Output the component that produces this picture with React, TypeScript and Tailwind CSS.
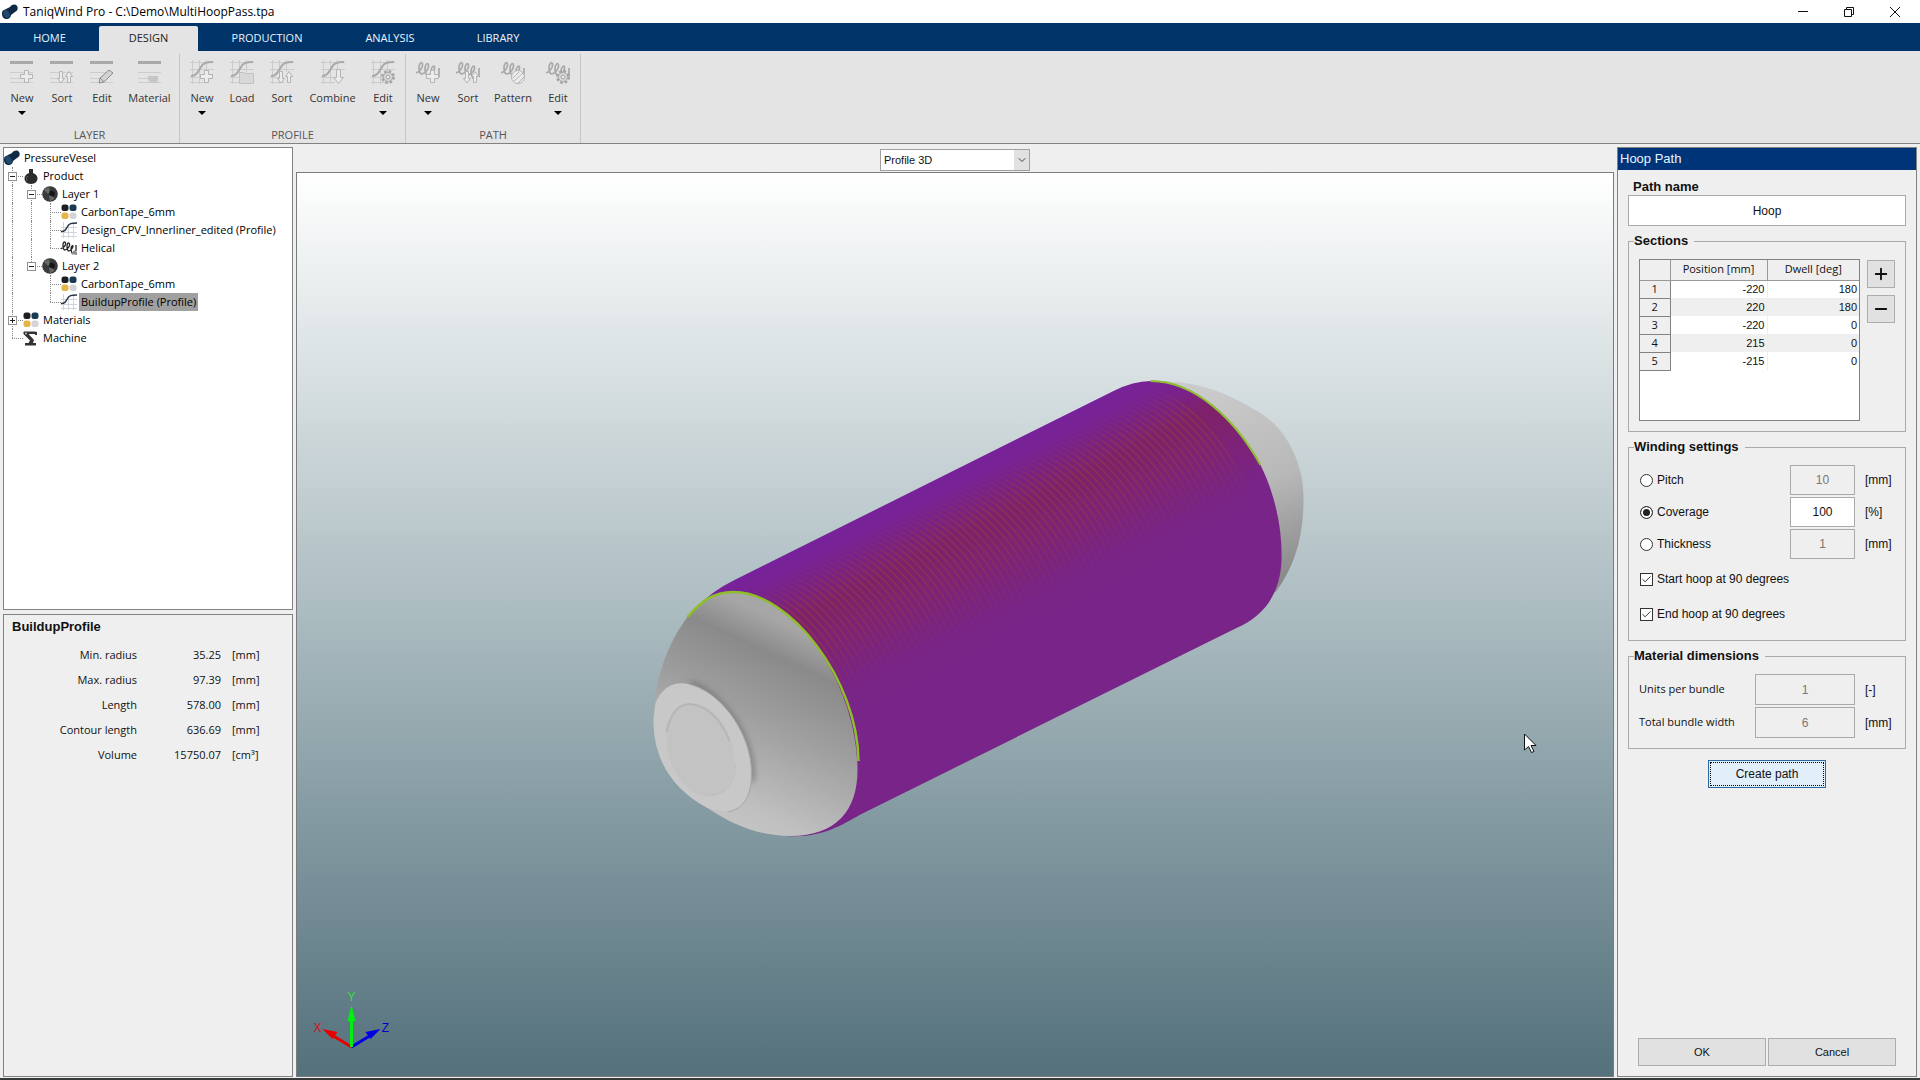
import type { ReactNode } from "react";
import { Check, ChevronDown, Minus, Plus } from "lucide-react";

type Base = "layer" | "profile" | "path";
type Badge = "plus" | "sort" | "pencil" | "swatch" | "folder" | "down" | "gear" | "pattern";
type Tool = { label: string; badge: Badge; width: string; menu?: boolean };

const tabs = [
  { label: "HOME", width: "w-[99px]" },
  { label: "DESIGN", width: "w-[99px]" },
  { label: "PRODUCTION", width: "w-[138px]" },
  { label: "ANALYSIS", width: "w-[108px]" },
  { label: "LIBRARY", width: "w-[108px]" },
];

const groups: { label: string; base: Base; tools: Tool[] }[] = [
  {
    label: "LAYER",
    base: "layer",
    tools: [
      { label: "New", badge: "plus", width: "w-10", menu: true },
      { label: "Sort", badge: "sort", width: "w-10" },
      { label: "Edit", badge: "pencil", width: "w-10" },
      { label: "Material", badge: "swatch", width: "w-[55px]" },
    ],
  },
  {
    label: "PROFILE",
    base: "profile",
    tools: [
      { label: "New", badge: "plus", width: "w-10", menu: true },
      { label: "Load", badge: "folder", width: "w-10" },
      { label: "Sort", badge: "sort", width: "w-10" },
      { label: "Combine", badge: "down", width: "w-[61px]" },
      { label: "Edit", badge: "gear", width: "w-10", menu: true },
    ],
  },
  {
    label: "PATH",
    base: "path",
    tools: [
      { label: "New", badge: "plus", width: "w-10", menu: true },
      { label: "Sort", badge: "sort", width: "w-10" },
      { label: "Pattern", badge: "pattern", width: "w-[50px]" },
      { label: "Edit", badge: "gear", width: "w-10", menu: true },
    ],
  },
];

type Cell = "none" | "line" | "tee" | "end" | "minus" | "minusEnd" | "plus";
type IconName = "vessel" | "product" | "layer" | "material" | "profile" | "helical" | "robot";

const tree: { label: string; icon: IconName; cells: Cell[]; selected?: boolean }[] = [
  { label: "PressureVesel", icon: "vessel", cells: [] },
  { label: "Product", icon: "product", cells: ["minus"] },
  { label: "Layer 1", icon: "layer", cells: ["line", "minus"] },
  { label: "CarbonTape_6mm", icon: "material", cells: ["line", "line", "tee"] },
  { label: "Design_CPV_Innerliner_edited (Profile)", icon: "profile", cells: ["line", "line", "tee"] },
  { label: "Helical", icon: "helical", cells: ["line", "line", "end"] },
  { label: "Layer 2", icon: "layer", cells: ["line", "minusEnd"] },
  { label: "CarbonTape_6mm", icon: "material", cells: ["line", "none", "tee"] },
  { label: "BuildupProfile (Profile)", icon: "profile", cells: ["line", "none", "end"], selected: true },
  { label: "Materials", icon: "material", cells: ["plus"] },
  { label: "Machine", icon: "robot", cells: ["end"] },
];

const properties = [
  { label: "Min. radius", value: "35.25", unit: "[mm]" },
  { label: "Max. radius", value: "97.39", unit: "[mm]" },
  { label: "Length", value: "578.00", unit: "[mm]" },
  { label: "Contour length", value: "636.69", unit: "[mm]" },
  { label: "Volume", value: "15750.07", unit: "[cm³]" },
];

const sections = [
  { position: -220, dwell: 180 },
  { position: 220, dwell: 180 },
  { position: -220, dwell: 0 },
  { position: 215, dwell: 0 },
  { position: -215, dwell: 0 },
];

const winding = [
  { label: "Pitch", value: "10", unit: "[mm]" },
  { label: "Coverage", value: "100", unit: "[%]", active: true },
  { label: "Thickness", value: "1", unit: "[mm]" },
];

const dimensions = [
  { label: "Units per bundle", value: "1", unit: "[-]" },
  { label: "Total bundle width", value: "6", unit: "[mm]" },
];

export default function App() {
  return (
    <div className="flex h-screen flex-col bg-[#efefef] font-['Open_Sans',sans-serif] text-[11px] text-[#111]">
      <TitleBar />
      <Ribbon />
      <main className="flex min-h-0 flex-1 gap-[3px] px-[3px] pt-[3px] pb-px">
        <aside className="flex w-[290px] shrink-0 flex-col gap-1">
          <ProjectTree />
          <Properties />
        </aside>
        <section className="flex min-w-0 flex-1 flex-col">
          <div className="flex h-[25px] items-end justify-center pb-px">
            <div className="relative">
              <select
                aria-label="View"
                className="block h-[22px] w-[150px] appearance-none border border-[#a0a0a0] bg-white pl-[3px] font-['Liberation_Sans',sans-serif] text-[11px]"
              >
                <option>Profile 3D</option>
              </select>
              <span className="pointer-events-none absolute top-px right-px flex h-5 w-[15px] items-center justify-center bg-[#e1e1e1]">
                <ChevronDown className="size-3 text-[#444]" strokeWidth={2} />
              </span>
            </div>
          </div>
          <div className="min-h-0 flex-1 border border-[#7b7b7b] bg-linear-to-b from-white via-[#a9babf] to-[#54717c]">
            <Viewport />
          </div>
        </section>
        <HoopPath />
      </main>
      <div className="h-0.5 bg-[#363a38]" />
    </div>
  );
}

function TitleBar() {
  return (
    <header className="flex h-[23px] items-center bg-white pr-[17px] pl-0.5">
      <TreeIcon name="vessel" />
      <h1 className="ml-[5px] flex-1 text-xs text-black">TaniqWind Pro - C:\Demo\MultiHoopPass.tpa</h1>
      <div className="flex gap-[30px]">
        <button aria-label="Minimize" className="flex size-4 items-center justify-center">
          <svg viewBox="0 0 12 12" className="size-3" stroke="#111" fill="none">
            <path d="M1 5.500h10" />
          </svg>
        </button>
        <button aria-label="Restore" className="flex size-4 items-center justify-center">
          <svg viewBox="0 0 12 12" className="size-3" stroke="#111" fill="none">
            <path d="M1.500 3.500h7v7h-7zM3.500 3.500v-2h7v7h-2" />
          </svg>
        </button>
        <button aria-label="Close" className="flex size-4 items-center justify-center">
          <svg viewBox="0 0 12 12" className="size-3" stroke="#111" fill="none">
            <path d="M1 1l10 10M11 1L1 11" />
          </svg>
        </button>
      </div>
    </header>
  );
}

function Ribbon() {
  return (
    <div>
      <nav className="flex h-7 bg-[#003468] pt-[3px]">
        {tabs.map((t) => (
          <button
            key={t.label}
            className={`${t.width} ${t.label === "DESIGN" ? "rounded-t-xs bg-[#e4e4e4] text-[#222]" : "text-[#e8f4ff]"}`}
          >
            {t.label}
          </button>
        ))}
      </nav>
      <div className="flex h-[93px] border-b border-[#828282] bg-[#e4e4e4] pt-[3px]">
        {groups.map((g) => (
          <div key={g.label} className="flex flex-col border-r border-[#c6c6c6] px-0.5">
            <div className="flex flex-1">
              {g.tools.map((t) => (
                <button key={t.label} className={`${t.width} flex flex-col items-center pt-1.5 text-[#333]`}>
                  <ToolIcon base={g.base} badge={t.badge} />
                  <span className="mt-1.5 leading-4">{t.label}</span>
                  {t.menu && (
                    <svg viewBox="0 0 8 4" className="mt-[5px] h-1 w-2">
                      <path d="M0 0h8L4 4z" fill="#000" />
                    </svg>
                  )}
                </button>
              ))}
            </div>
            <div className="text-center leading-4 text-[#555]">{g.label}</div>
          </div>
        ))}
      </div>
    </div>
  );
}

function ToolIcon({ base, badge }: { base: Base; badge: Badge }) {
  return (
    <svg viewBox="0 0 24 24" className="size-6" fill="none" stroke="#a9a9a9">
      {base === "layer" && (
        <>
          <path d="M0 2.500h23" strokeWidth="3" />
          <path d="M0 12.500h23M0 18.500h12M0 22.500h23" stroke="#cdcdcd" />
        </>
      )}
      {base === "profile" && (
        <>
          <path d="M2.500 0v24M9.500 0v24M16.500 0v12M0 2.500h24M0 9.500h24M0 17.500h12M0 22.500h14" stroke="#cbcbcb" />
          <path d="M1 16c5 0 7-4 10-9 2-4 5-5 12-5" strokeWidth="2" />
        </>
      )}
      {base === "path" && (
        <path
          d="M0 13C4 12 7 7 6.500 4 6 1 3 3 3 8c0 4 1 6 3 6 4-1 7-6 6.500-9-.5-3-3.500-1-3.500 4 0 4 1 6 3 6 4-1 7-5 6.500-8-.5-2-3.500 0-3.500 4 0 5 1 7 4 9M23 8v9"
          strokeWidth="1.700"
        />
      )}
      <ToolBadge badge={badge} />
    </svg>
  );
}

function ToolBadge({ badge }: { badge: Badge }) {
  const common = { fill: "#ececec", stroke: "#b4b4b4" };
  if (badge === "plus") return <path {...common} d="M14.500 10.500h4v4h4v4h-4v4h-4v-4h-4v-4h4z" />;
  if (badge === "sort")
    return <path {...common} d="M9.500 11.500h3v7h2l-3.500 4.500-3.500-4.500h2zM17.500 22.500h3v-6h2L19 11.500l-3.500 5h2z" />;
  if (badge === "pencil") return <path fill="#d2d2d2" stroke="#8d8d8d" d="M9 23l1-5 9-8 4 3-9 9zM10 18l4 4" />;
  if (badge === "swatch") return <path fill="#c6c6c6" stroke="none" d="M10 16h10v3c0 3-2 4-5 4s-5-2-5-4z" />;
  if (badge === "folder") return <path fill="#d8d8d8" stroke="#c2c2c2" d="M9.500 12.500h5l1 1h8v10h-14z" />;
  if (badge === "down") return <path {...common} d="M15.500 9.500h4v8h3L17.500 23.500l-5-6h3z" />;
  if (badge === "pattern")
    return (
      <>
        <circle {...common} cx="17" cy="17" r="6.500" />
        <path stroke="#b4b4b4" d="M12 18l6-6M13 21l9-8M17 23l6-6" />
      </>
    );
  return (
    <>
      <circle cx="17" cy="17" r="5.500" fill="#dcdcdc" stroke="#a4a4a4" strokeWidth="3" strokeDasharray="2.500 1.800" />
      <circle cx="17" cy="17" r="4.500" fill="#dcdcdc" stroke="#a9a9a9" />
      <circle cx="17" cy="17" r="2" fill="#f0f0f0" stroke="#9c9c9c" />
    </>
  );
}

function TreeIcon({ name }: { name: IconName }) {
  return (
    <svg viewBox="0 0 16 16" className="size-4 shrink-0">
      {name === "vessel" && (
        <>
          <path d="M1 6.500L8 3c1-2 4-3 6-2 2 1 2 4 1 5.500L9 11c0 2-2 4-4 4-3 0-5-2-5-5 0-1.500 0-2.500 1-3.500z" fill="#0e2a45" />
          <ellipse cx="4.500" cy="10" rx="3" ry="4" transform="rotate(-25 4.500 10)" fill="#1f4a6e" />
        </>
      )}
      {name === "product" && (
        <>
          <path d="M6 1h4v4c3 1 4.500 3 4.500 5.500S12.500 16 8 16s-6.500-3-6.500-5.500S3 6 6 5z" fill="#2c2c2c" />
          <path d="M5 8c-1.500 1-2 3-1 5" stroke="#666" fill="none" />
        </>
      )}
      {name === "layer" && (
        <>
          <circle cx="8" cy="8" r="7.800" fill="#3a3a3a" />
          <path d="M2 4l4-3 3 4-3 3zM7 10l4-2 1 5-4 2z" fill="#666" />
          <path d="M8 4l5 2-1 5-5-2z" fill="#161616" />
        </>
      )}
      {name === "material" && (
        <>
          <rect x="0.500" y="0.500" width="7" height="6.500" rx="2.500" fill="#1d1f22" />
          <rect x="8.500" y="0.500" width="7" height="6.500" rx="2.500" fill="#173a52" />
          <rect x="0.500" y="8.500" width="7" height="6.500" rx="2.500" fill="#e5b54a" />
          <rect x="8.500" y="8.500" width="7" height="6.500" rx="2.500" fill="#d3d3d8" />
        </>
      )}
      {name === "profile" && (
        <>
          <path d="M2.500 0v16M7.500 2v14M12.500 2v14M0 5.500h16M0 10.500h16M0 14.500h16" stroke="#d0d4dc" />
          <path d="M0 9.500c4 0 5-2 6.500-5S10 1 16 1" stroke="#25364a" strokeWidth="1.500" fill="none" />
        </>
      )}
      {name === "helical" && (
        <>
          <path
            d="M0 8.500C3 8 5 5 4.500 3 4 1 2 2 2 5s1 5 2 5c3-1 5-4 4.500-6S6 3 6 6s1 5 2 5c3-1 4-4 4-5s-2 0-2 3 1 4 2 5M15 5v6"
            stroke="#222"
            strokeWidth="1.300"
            fill="none"
          />
          <path d="M10 14l3-4 3 2v3z" fill="#8b8b8b" />
        </>
      )}
      {name === "robot" && (
        <>
          <path d="M1 1.500h10.500l2.500.5v3h-2V4H5.500l5.500 6-1 3H13v2.500H2V13h3.500L7 10.500 2 5.500C0 4.500 0 2 1 1.500z" fill="#333" />
          <circle cx="3" cy="3.500" r="1" fill="#bbb" />
        </>
      )}
    </svg>
  );
}

function Guide({ cell }: { cell: Cell }) {
  const half = cell === "end" || cell === "minusEnd";
  const box = cell === "minus" || cell === "minusEnd" || cell === "plus";
  return (
    <span className="relative h-[18px] w-[19px] shrink-0">
      {cell !== "none" && (
        <span className={`absolute top-0 left-2 border-l border-dotted border-[#888] ${half ? "h-[9px]" : "h-[18px]"}`} />
      )}
      {cell !== "none" && cell !== "line" && (
        <span className="absolute top-[9px] left-2 w-[11px] border-t border-dotted border-[#888]" />
      )}
      {box && (
        <span className="absolute top-[5px] left-1 flex size-[9px] items-center justify-center border border-[#919191] bg-white">
          <svg viewBox="0 0 5 5" className="size-[5px]" stroke="#222">
            <path d={cell === "plus" ? "M0 2.500h5M2.500 0v5" : "M0 2.500h5"} />
          </svg>
        </span>
      )}
    </span>
  );
}

function ProjectTree() {
  return (
    <div className="h-[463px] shrink-0 border border-[#828282] bg-white pt-px text-black">
      <ul>
        {tree.map((n, i) => (
          <li key={i} className="flex h-[18px] items-center">
            {n.cells.map((c, j) => (
              <Guide key={j} cell={c} />
            ))}
            <TreeIcon name={n.icon} />
            <span className={`ml-0.5 px-0.5 leading-[18px] ${n.selected ? "bg-[#a0a0a0]" : ""}`}>{n.label}</span>
          </li>
        ))}
      </ul>
    </div>
  );
}

function Properties() {
  return (
    <div className="min-h-0 flex-1 border border-[#828282] pt-1">
      <h2 className="pl-2 font-['Liberation_Sans',sans-serif] text-[13px] leading-4 font-bold">BuildupProfile</h2>
      <dl className="mt-2">
        {properties.map((p) => (
          <div key={p.label} className="flex h-[25px] items-center">
            <dt className="w-[133px] text-right">{p.label}</dt>
            <dd className="flex">
              <span className="w-[84px] text-right">{p.value}</span>
              <span className="pl-[11px]">{p.unit}</span>
            </dd>
          </div>
        ))}
      </dl>
    </div>
  );
}

// coordinates below are window pixels at the default 1920x1080 layout
const frontArc = "M733 592C790 594 853 680 858 760";
const hoops = Array.from({ length: 75 }, (_, i) => i / 75);

function Viewport() {
  return (
    <svg viewBox="297 173 1315 903" className="size-full">
      <defs>
        <linearGradient id="wrap" gradientUnits="userSpaceOnUse" x1="733" y1="580" x2="835" y2="782">
          <stop offset="0" stopColor="#77229a" />
          <stop offset="0.120" stopColor="#782290" />
          <stop offset="0.280" stopColor="#7f2168" />
          <stop offset="0.450" stopColor="#7d2276" />
          <stop offset="0.650" stopColor="#782488" />
          <stop offset="1" stopColor="#782488" />
        </linearGradient>
        <linearGradient id="hoop" gradientUnits="userSpaceOnUse" x1="744" y1="594" x2="850" y2="720">
          <stop offset="0" stopColor="#9a4040" stopOpacity="0" />
          <stop offset="0.250" stopColor="#964040" stopOpacity="0.550" />
          <stop offset="0.550" stopColor="#94403c" stopOpacity="0.450" />
          <stop offset="1" stopColor="#903050" stopOpacity="0" />
        </linearGradient>
        <linearGradient id="dome" gradientUnits="userSpaceOnUse" x1="800" y1="610" x2="700" y2="825">
          <stop offset="0" stopColor="#a8a8a8" />
          <stop offset="0.080" stopColor="#a6a6a6" />
          <stop offset="0.220" stopColor="#8a8a8a" />
          <stop offset="0.500" stopColor="#a0a0a0" />
          <stop offset="0.850" stopColor="#c0c0c0" />
          <stop offset="1" stopColor="#c6c6c6" />
        </linearGradient>
        <linearGradient id="rear" gradientUnits="userSpaceOnUse" x1="1220" y1="390" x2="1290" y2="580">
          <stop offset="0" stopColor="#cacaca" />
          <stop offset="0.500" stopColor="#b8b8b8" />
          <stop offset="1" stopColor="#888888" />
        </linearGradient>
        <filter id="soft" x="-20%" y="-20%" width="140%" height="140%">
          <feGaussianBlur stdDeviation="3" />
        </filter>
      </defs>

      <path
        d="M1150 381C1190 381 1215 386 1260 413C1290 432 1304 470 1303 500C1303 540 1292 570 1275 592L1200 560z"
        fill="url(#rear)"
      />
      <path
        d="M700 604Q712 591 734 580L1113 391Q1133 381 1150 381C1195 381 1238 422 1260 465C1275 495 1282 530 1281 560C1280 595 1262 617 1236 628L859 815C840 826 820 838 787 836z"
        fill="url(#wrap)"
      />
      {hoops.map((t) => (
        <path
          key={t}
          d={frontArc}
          transform={`translate(${(t * 410).toFixed(1)} ${(t * -207).toFixed(1)})`}
          fill="none"
          stroke="url(#hoop)"
          strokeWidth="1.500"
        />
      ))}
      <path d="M1150 381C1195 381 1235 420 1260 465" fill="none" stroke="#8fbf30" strokeWidth="2" />
      <path
        d="M687 617C700 602 712 592 733 592C790 592 857 680 857 770C857 810 836 836 790 836C755 836 728 822 707 808C668 787 653 755 653 720C653 680 668 642 687 617z"
        fill="url(#dome)"
      />
      <path d="M690 683C728 696 756 748 751 782" fill="none" stroke="#6f6f6f" strokeWidth="4" filter="url(#soft)" />
      <path
        d="M655 703C662 687 673 681 688 684C722 692 751 735 751 773C751 795 744 809 727 812L707 808C668 787 653 755 653 720z"
        fill="#c8c8c8"
      />
      <path d="M688 684C722 692 751 735 751 773C751 795 744 809 727 812" fill="none" stroke="#a6a6a6" strokeWidth="1" />
      <ellipse cx="700" cy="750" rx="32" ry="48" transform="rotate(-18 700 750)" fill="#c3c3c3" />
      <path d="M666 732C670 712 678 704 690 704C708 706 722 722 729 741" fill="none" stroke="#b6b6b6" strokeWidth="2" />
      <path d="M735 763C735 784 724 798 704 794" fill="none" stroke="#bdbdbd" />
      <path d="M687 617C700 602 712 592 733 592C790 592 857 680 858 761" fill="none" stroke="#8fbf28" strokeWidth="2.500" />

      <g strokeWidth="3">
        <path d="M351 1047L333 1036" stroke="#e80000" />
        <path d="M322 1029l15 3-5 7z" fill="#e80000" />
        <path d="M351 1047L369 1036" stroke="#0000e0" />
        <path d="M380 1029l-15 3 5 7z" fill="#0000e0" />
        <path d="M351 1047V1018" stroke="#00ee10" />
        <path d="M351 1005l4 16h-8z" fill="#00ee10" />
      </g>
      <g className="font-['Liberation_Sans',sans-serif] text-xs" textAnchor="middle">
        <text x="317" y="1032" fill="#d01020">X</text>
        <text x="351" y="1001" fill="#30e040">Y</text>
        <text x="385" y="1032" fill="#0000c8">Z</text>
      </g>
      <path d="M1524 734v16l4-3.500 3 6 2.500-1-3-6h5z" fill="#fff" stroke="#111" />
    </svg>
  );
}

function Group({ title, children }: { title: string; children: ReactNode }) {
  return (
    <fieldset className="border border-[#aaa] px-2.5 pt-[9px] pb-2.5">
      <legend className="-ml-[5px] pr-1.5 text-[13px] leading-[18px] font-bold">{title}</legend>
      {children}
    </fieldset>
  );
}

function HoopPath() {
  return (
    <form
      onSubmit={(e) => e.preventDefault()}
      className="flex w-[300px] shrink-0 flex-col border border-[#828282] font-['Liberation_Sans',sans-serif] text-xs"
    >
      <h2 className="h-[22px] bg-[#003478] pl-0.5 text-[13px] leading-[21px] text-[#e8f4ff]">Hoop Path</h2>
      <div className="flex flex-1 flex-col gap-1.5 px-2.5 pt-[9px] pb-2.5">
        <div>
          <label htmlFor="path-name" className="block pl-[5px] text-[13px] leading-4 font-bold">
            Path name
          </label>
          <input
            id="path-name"
            defaultValue="Hoop"
            className="block h-[31px] w-full border border-[#aaa] bg-white text-center"
          />
        </div>

        <Group title="Sections">
          <div className="flex gap-[7px]">
            <div className="h-[162px] w-[221px] border border-[#828282] bg-white">
              <table className="w-full table-fixed">
                <thead className="bg-[#efefef] font-['Open_Sans',sans-serif] text-[11px]">
                  <tr className="h-5">
                    <th className="w-[30px] border-r border-b border-[#999]" />
                    <th className="w-[97px] border-r border-b border-[#999] font-normal">Position [mm]</th>
                    <th className="border-b border-[#999] font-normal">Dwell [deg]</th>
                  </tr>
                </thead>
                <tbody className="text-[11px]">
                  {sections.map((s, i) => (
                    <tr key={i} className="h-[18px] even:bg-[#efefef]">
                      <th className="border-r border-b border-[#828282] bg-[#efefef] font-['Open_Sans',sans-serif] font-normal">
                        {i + 1}
                      </th>
                      <td className="border-r border-[#eee] pr-0.5 text-right">{s.position}</td>
                      <td className="pr-0.5 text-right">{s.dwell}</td>
                    </tr>
                  ))}
                </tbody>
              </table>
            </div>
            <div className="flex flex-col gap-[7px] pt-px">
              <button aria-label="Add section" className="flex size-7 items-center justify-center border border-[#adadad] bg-[#e1e1e1]">
                <Plus className="size-[18px]" strokeWidth={2.5} />
              </button>
              <button aria-label="Remove section" className="flex size-7 items-center justify-center border border-[#adadad] bg-[#e1e1e1]">
                <Minus className="size-[18px]" strokeWidth={2.5} />
              </button>
            </div>
          </div>
        </Group>

        <Group title="Winding settings">
          <div className="flex flex-col gap-0.5">
            {winding.map((w) => (
              <div key={w.label} className="flex h-[30px] items-center">
                <label className="flex flex-1 items-center gap-1 pl-px">
                  <input
                    type="radio"
                    name="winding"
                    defaultChecked={w.active}
                    className="size-[13px] appearance-none rounded-full border border-[#333] bg-white checked:bg-[#222] checked:ring-2 checked:ring-white checked:ring-inset"
                  />
                  {w.label}
                </label>
                <input
                  aria-label={`${w.label} value`}
                  defaultValue={w.value}
                  disabled={!w.active}
                  className="h-full w-[65px] border border-[#aaa] bg-white text-center disabled:bg-[#efefef] disabled:text-[#777]"
                />
                <span className="w-10 pl-2.5">{w.unit}</span>
              </div>
            ))}
          </div>
          <div className="flex flex-col gap-[17px] pt-[11px] pb-[7px]">
            <Tick label="Start hoop at 90 degrees" />
            <Tick label="End hoop at 90 degrees" />
          </div>
        </Group>

        <Group title="Material dimensions">
          <div className="flex flex-col gap-0.5">
            {dimensions.map((d) => (
              <label key={d.label} className="flex h-[31px] items-center">
                <span className="flex-1 font-['Open_Sans',sans-serif] text-[11px]">{d.label}</span>
                <input
                  disabled
                  defaultValue={d.value}
                  className="h-full w-[100px] border border-[#aaa] text-center text-[#777]"
                />
                <span className="w-10 pl-2.5">{d.unit}</span>
              </label>
            ))}
          </div>
        </Group>

        <button className="mt-[5px] h-7 w-[118px] self-center border border-[#2a6aa0] bg-[#e1effb] p-px">
          <span className="flex h-full items-center justify-center border border-dotted border-black">Create path</span>
        </button>

        <div className="mt-auto flex gap-0.5 px-2.5 text-[11px]">
          <button className="h-7 flex-1 border border-[#adadad] bg-[#e1e1e1]">OK</button>
          <button className="h-7 flex-1 border border-[#adadad] bg-[#e1e1e1]">Cancel</button>
        </div>
      </div>
    </form>
  );
}

function Tick({ label }: { label: string }) {
  return (
    <label className="flex h-[18px] items-center gap-1 pl-px">
      <span className="relative flex">
        <input type="checkbox" defaultChecked className="peer size-[13px] appearance-none border border-[#333] bg-white" />
        <Check className="pointer-events-none absolute top-px left-px hidden size-[11px] text-[#222] peer-checked:block" />
      </span>
      {label}
    </label>
  );
}
